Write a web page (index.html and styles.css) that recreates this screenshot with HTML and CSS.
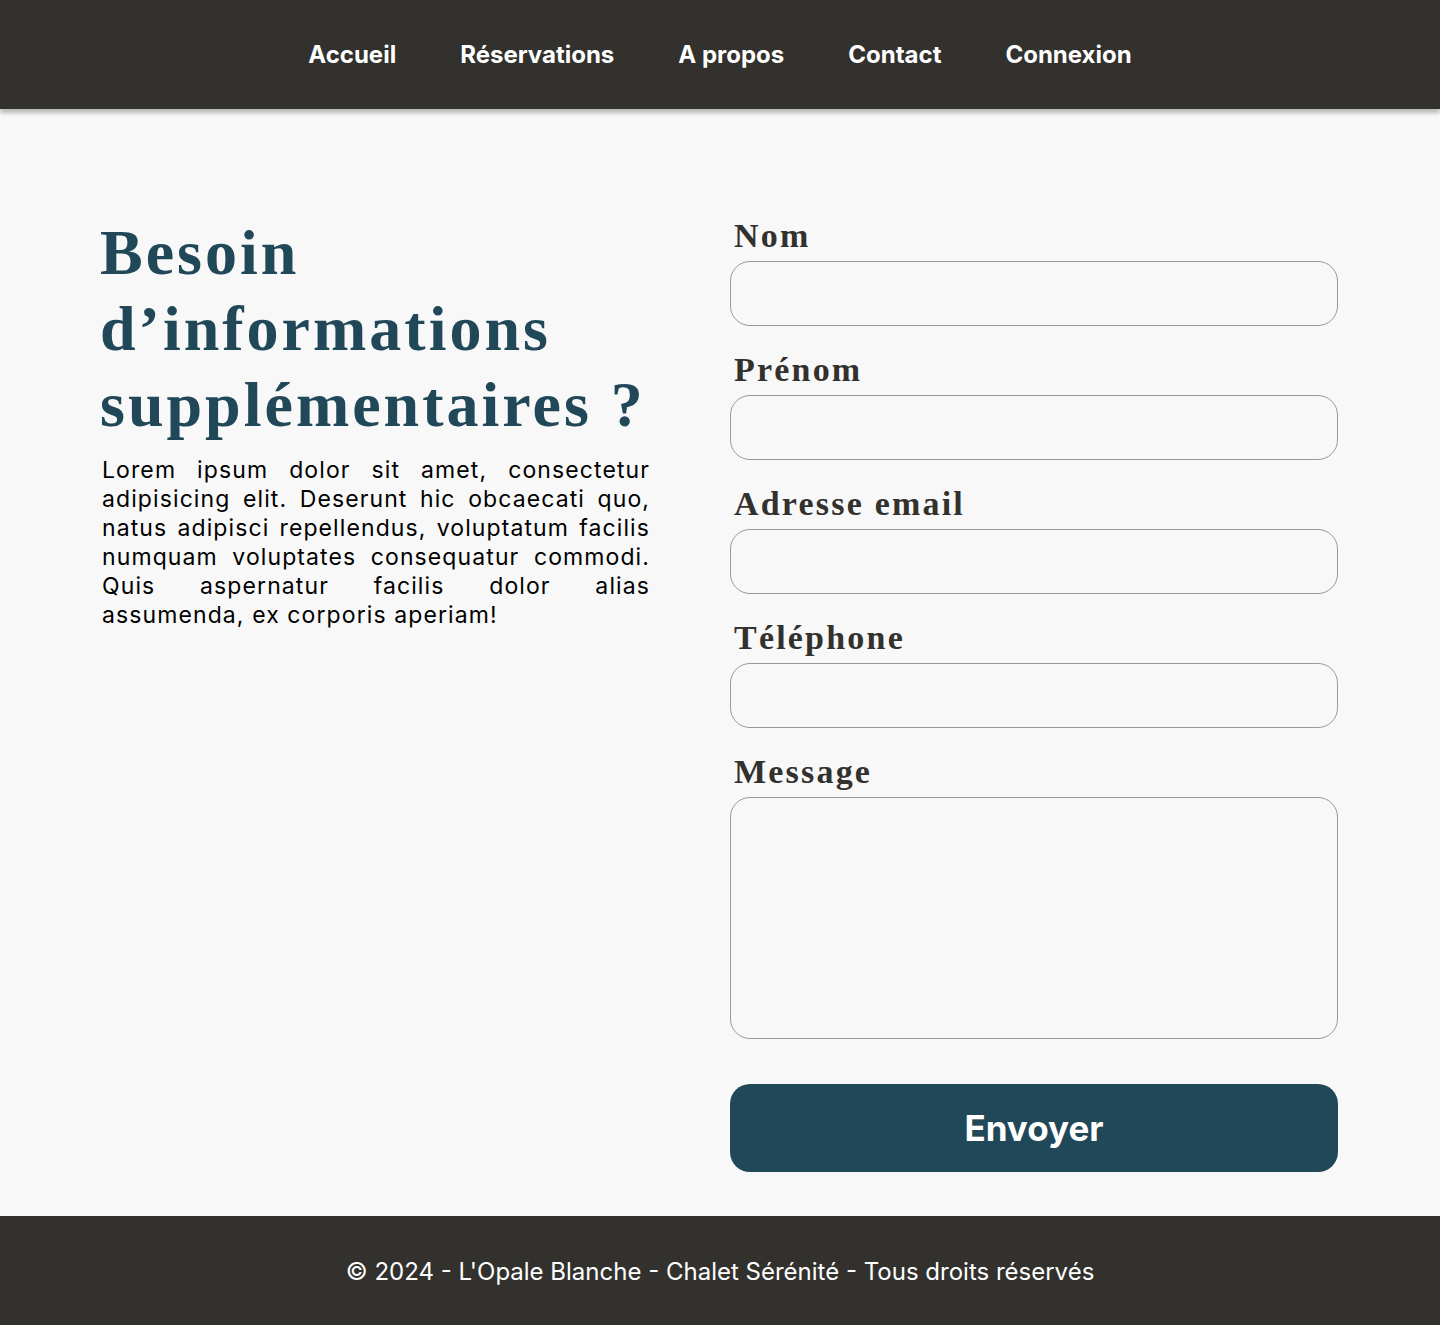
FILE: index.html
```html
<!DOCTYPE html>
<html lang="fr">
<head>
<meta charset="utf-8">
<title>Contact - L'Opale Blanche</title>
<link rel="stylesheet" href="styles.css">
</head>
<body>
<header class="site-header">
  <nav class="nav">
    <a class="nav-link" href="#">Accueil</a>
    <a class="nav-link" href="#">Réservations</a>
    <a class="nav-link" href="#">A propos</a>
    <a class="nav-link" href="#">Contact</a>
    <a class="nav-link" href="#">Connexion</a>
  </nav>
</header>
<main class="main">
  <div class="contact">
    <section class="intro">
      <h1 class="intro-title">Besoin d’informations supplémentaires ?</h1>
      <p class="intro-text">Lorem ipsum dolor sit amet, consectetur adipisicing elit. Deserunt hic obcaecati quo, natus adipisci repellendus, voluptatum facilis numquam voluptates consequatur commodi. Quis aspernatur facilis dolor alias assumenda, ex corporis aperiam!</p>
    </section>
    <form class="form">
      <div class="field">
        <label class="field-label" for="nom">Nom</label>
        <input class="field-input" id="nom" type="text">
      </div>
      <div class="field">
        <label class="field-label" for="prenom">Prénom</label>
        <input class="field-input" id="prenom" type="text">
      </div>
      <div class="field">
        <label class="field-label" for="email">Adresse email</label>
        <input class="field-input" id="email" type="email">
      </div>
      <div class="field">
        <label class="field-label" for="tel">Téléphone</label>
        <input class="field-input" id="tel" type="tel">
      </div>
      <div class="field field-last">
        <label class="field-label" for="msg">Message</label>
        <textarea class="field-input field-textarea" id="msg"></textarea>
      </div>
      <button class="submit" type="button">Envoyer</button>
    </form>
  </div>
</main>
<footer class="site-footer">
  <p class="footer-text">© 2024 - L'Opale Blanche - Chalet Sérénité - Tous droits réservés</p>
</footer>
</body>
</html>
```
FILE: styles.css
```css
* {
  box-sizing: border-box;
}

html, body {
  margin: 0;
  padding: 0;
}

body {
  background: #f8f8f8;
  font-family: Inter, "Noto Sans", sans-serif;
  color: #000;
}

.site-header {
  position: relative;
  z-index: 2;
  height: 109px;
  background: #32312d;
  box-shadow: 0 4px 4px rgba(0, 0, 0, 0.25);
  display: flex;
  align-items: center;
  justify-content: center;
}

.nav {
  display: flex;
  gap: 64px;
  align-items: center;
}

.nav-link {
  color: #fff;
  text-decoration: none;
  font-family: Inter, sans-serif;
  font-weight: 700;
  font-size: 24px;
  line-height: 1;
}

.main {
  padding: 104px 0 44px;
}

.contact {
  width: 1240px;
  margin: 0 auto;
  display: flex;
  gap: 80px;
  align-items: flex-start;
}

.intro {
  width: 550px;
  flex: none;
  padding-top: 2px;
}

.intro-title {
  margin: 0;
  font-family: "Liberation Serif", "Times New Roman", serif;
  font-weight: 700;
  font-size: 64px;
  line-height: 76px;
  letter-spacing: 3px;
  color: #214858;
}

.intro-text {
  margin: 13px 0 0 2px;
  font-family: Inter, sans-serif;
  font-size: 23px;
  line-height: 29px;
  letter-spacing: 1.1px;
  text-align: justify;
  color: #000;
}

.form {
  width: 608px;
  flex: none;
  display: flex;
  flex-direction: column;
  padding-top: 5px;
}

.field {
  display: flex;
  flex-direction: column;
  margin-bottom: 26px;
}

.field-label {
  font-family: "Liberation Serif", "Times New Roman", serif;
  font-weight: 700;
  font-size: 34px;
  line-height: 36px;
  letter-spacing: 2.2px;
  color: #32312d;
  margin: 0 0 7px 4px;
}

.field-input {
  width: 608px;
  height: 65px;
  border: 1px solid #999;
  border-radius: 20px;
  background: #f8f8f8;
  font-family: Inter, sans-serif;
  font-size: 18px;
  padding: 0 20px;
  outline: none;
}

.field-textarea {
  height: 242px;
  resize: none;
  padding: 16px 20px;
}

.field-last {
  margin-bottom: 45px;
}

.submit {
  width: 608px;
  height: 88px;
  border: none;
  border-radius: 20px;
  background: #214858;
  color: #fff;
  font-family: Inter, sans-serif;
  font-weight: 700;
  font-size: 35px;
  cursor: pointer;
}

.site-footer {
  height: 109px;
  background: #32312d;
  display: flex;
  align-items: center;
  justify-content: center;
}

.footer-text {
  margin: 0;
  color: #fff;
  font-family: Inter, sans-serif;
  font-size: 24px;
  padding-top: 1px;
}
```
